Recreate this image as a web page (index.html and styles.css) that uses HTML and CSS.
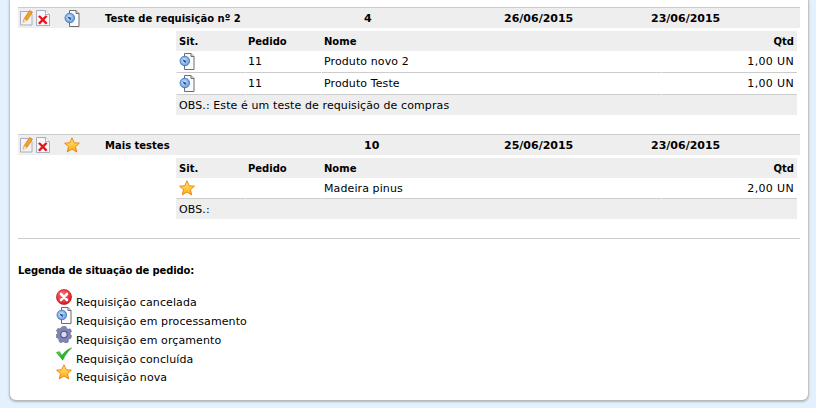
FILE: index.html
```html
<!DOCTYPE html>
<html lang="pt">

<head>
    <meta charset="utf-8">
    <title>Requisições</title>
    <link rel="stylesheet" href="styles.css">
</head>

<body>
    <svg class="defs" width="0" height="0">
        <defs>
            <linearGradient id="gStar" x1="0" y1="0" x2="0" y2="1">
                <stop offset="0" stop-color="#ffea70"/>
                <stop offset="1" stop-color="#ffa914"/>
            </linearGradient>
            <radialGradient id="gRed" cx="0.4" cy="0.3" r="0.8">
                <stop offset="0" stop-color="#ff6a6a"/>
                <stop offset="1" stop-color="#d80f20"/>
            </radialGradient>
            <radialGradient id="gBlue" cx="0.45" cy="0.45" r="0.6">
                <stop offset="0" stop-color="#e6f1fd"/>
                <stop offset="1" stop-color="#4f8ddb"/>
            </radialGradient>
            <linearGradient id="gCheck" x1="0" y1="0" x2="1" y2="1">
                <stop offset="0" stop-color="#5fe04a"/>
                <stop offset="1" stop-color="#0d8f1b"/>
            </linearGradient>
            <symbol id="i-edit" viewBox="0 0 16 16">
                <path d="M1.500 1.500h8l3.500 3v10.500h-11.500z" fill="#f2f2f7" stroke="#a9adbd"/>
                <path d="M4 12.500l1-3.500 5.500-8.500 3 1.500-5.500 8.500z" fill="#f5a020" stroke="#c96f0d" stroke-width=".6"/>
                <path d="M4 13.500l1-4.500 3.200 2z" fill="#f6dfb5"/>
            </symbol>
            <symbol id="i-del" viewBox="0 0 16 16">
                <path d="M1.500 .5h9l4 4v11h-13z" fill="#f7f7fa" stroke="#a9adbd"/>
                <path d="M10.500 .5v4h4" fill="#fff" stroke="#a9adbd"/>
                <path d="M3 6.500l1.800-1.300 3 2.800 3-2.800 1.700 1.300-3 3.300 3 3.200-1.700 1.500-3-3-3 3L3 13l3.200-3.200z" fill="#e8151c"/>
            </symbol>
            <symbol id="i-doc" viewBox="0 0 16 17">
                <path d="M5.500 .5h6.500l3 3v13h-9.500z" fill="#fbfbfb" stroke="#6a6d74"/>
                <path d="M12 .5v3h3" fill="#ddd" stroke="#6a6d74"/>
                <circle cx="5.800" cy="8" r="4.800" fill="url(#gBlue)" stroke="#3d74bd" stroke-width=".8"/>
                <path d="M3.500 6.500l4.500 1.500-1.500 .5 .5 1.800-2.200-1.600z" fill="#1d4688"/>
            </symbol>
            <symbol id="i-star" viewBox="0 0 16 16">
                <path d="M8 .8l2.200 4.900 5.200.5-3.900 3.500 1.200 5.300L8 12l-4.700 2.900 1.200-5.300L.6 6.200l5.200-.5z" fill="url(#gStar)" stroke="#e8800d" stroke-width=".9"/>
            </symbol>
            <symbol id="i-cancel" viewBox="0 0 16 16">
                <circle cx="8" cy="8" r="7.500" fill="url(#gRed)" stroke="#b30f1d" stroke-width=".7"/>
                <path d="M5 5l6 6M11 5l-6 6" stroke="#fff" stroke-width="2.600" stroke-linecap="round"/>
            </symbol>
            <symbol id="i-gear" viewBox="0 0 16 17">
                <path d="M6.500 .5h3.500l.5 2 1.800.8 1.800-.5 1.500 2.500-1.300 1.600.2 1.800 1 .8-.5 2.800-1.900.5-.8 1.700-.2 1.800-2.800.8-1.300-1.400-1.900.4-1.300 1.100L3 15l-.2-1.900-1.500-1-1-.6V8.500l1.300-1-.2-1.800L.3 5l1.500-2.500 2 .3L5.300 1.500z" fill="#7f84b4" stroke="#585c8c" stroke-width=".5"/>
                <circle cx="8" cy="8.500" r="3.200" fill="#d9dbee" stroke="#4e5278" stroke-width="1.100"/>
            </symbol>
            <symbol id="i-check" viewBox="0 0 16 16">
                <path d="M.3 6.500l3-1 2.600 3.700C8.500 5.800 11.500 3.300 15.800 1.800c-3.700 3.400-6.800 7.500-9 12.400z" fill="url(#gCheck)" stroke="#0f8a1c" stroke-width=".4"/>
            </symbol>
        </defs>
    </svg>

    <main class="painel">
        <section class="requisicao">
            <div class="req-linha">
                <span class="req-acoes">
                    <svg class="icone"><use href="#i-edit"/></svg>
                    <svg class="icone"><use href="#i-del"/></svg>
                </span>
                <span class="req-sit"><svg class="icone alta"><use href="#i-doc"/></svg></span>
                <span class="req-nome">Teste de requisição nº 2</span>
                <span class="req-num">4</span>
                <span class="req-num req-data">26/06/2015</span>
                <span class="req-num">23/06/2015</span>
            </div>
            <table class="itens">
                <thead>
                    <tr>
                        <th class="col-sit">Sit.</th>
                        <th class="col-ped">Pedido</th>
                        <th class="col-nome">Nome</th>
                        <th class="col-qtd">Qtd</th>
                    </tr>
                </thead>
                <tbody>
                    <tr class="alta">
                        <td><svg class="icone alta"><use href="#i-doc"/></svg></td>
                        <td>11</td>
                        <td>Produto novo 2</td>
                        <td class="col-qtd">1,00 UN</td>
                    </tr>
                    <tr class="alta">
                        <td><svg class="icone alta"><use href="#i-doc"/></svg></td>
                        <td>11</td>
                        <td>Produto Teste</td>
                        <td class="col-qtd">1,00 UN</td>
                    </tr>
                    <tr>
                        <td class="obs" colspan="4">OBS.: Este é um teste de requisição de compras</td>
                    </tr>
                </tbody>
            </table>
        </section>

        <section class="requisicao">
            <div class="req-linha">
                <span class="req-acoes">
                    <svg class="icone"><use href="#i-edit"/></svg>
                    <svg class="icone"><use href="#i-del"/></svg>
                </span>
                <span class="req-sit"><svg class="icone"><use href="#i-star"/></svg></span>
                <span class="req-nome">Mais testes</span>
                <span class="req-num">10</span>
                <span class="req-num req-data">25/06/2015</span>
                <span class="req-num">23/06/2015</span>
            </div>
            <table class="itens">
                <thead>
                    <tr>
                        <th class="col-sit">Sit.</th>
                        <th class="col-ped">Pedido</th>
                        <th class="col-nome">Nome</th>
                        <th class="col-qtd">Qtd</th>
                    </tr>
                </thead>
                <tbody>
                    <tr>
                        <td><svg class="icone"><use href="#i-star"/></svg></td>
                        <td></td>
                        <td>Madeira pinus</td>
                        <td class="col-qtd">2,00 UN</td>
                    </tr>
                    <tr>
                        <td class="obs" colspan="4">OBS.:</td>
                    </tr>
                </tbody>
            </table>
        </section>

        <hr class="divisor">

        <h4 class="legenda-titulo">Legenda de situação de pedido:</h4>
        <ul class="legenda">
            <li><svg class="icone"><use href="#i-cancel"/></svg>Requisição cancelada</li>
            <li><svg class="icone alta"><use href="#i-doc"/></svg>Requisição em processamento</li>
            <li><svg class="icone alta"><use href="#i-gear"/></svg>Requisição em orçamento</li>
            <li><svg class="icone"><use href="#i-check"/></svg>Requisição concluída</li>
            <li><svg class="icone"><use href="#i-star"/></svg>Requisição nova</li>
        </ul>
    </main>
</body>

</html>
```

FILE: styles.css
```css
* {
    box-sizing: border-box;
}

html,
body {
    height: 100%;
}

body {
    margin: 0;
    overflow: hidden;
    background-color: #e3f0fd;
    color: #000;
    font-family: "DejaVu Sans", Verdana, sans-serif;
    font-size: 11px;
    letter-spacing: 0.1px;
}

.defs {
    position: absolute;
}

.icone {
    display: block;
    flex: none;
    width: 16px;
    height: 16px;
}

.icone.alta {
    height: 17px;
}

.painel {
    width: 798px;
    height: 400px;
    margin-left: 10px;
    padding: 7px 8px 0 8px;
    background-color: #fff;
    border-radius: 0 0 6px 6px;
    box-shadow: 0 1px 2px 1px #b5b5b5;
}

.requisicao {
    margin-bottom: 19px;
}

.req-linha {
    display: grid;
    grid-template-columns: 46px 41px 259px 30px 110px 147px 1fr;
    align-items: center;
    height: 21px;
    background-color: #eee;
    border-top: 1px solid #ccc;
    font-size: 10px;
    font-weight: bold;
    letter-spacing: 0;
}

.req-acoes {
    display: flex;
    padding-left: 1px;
}

.req-num {
    font-size: 11px;
}

.req-data {
    grid-column: 6;
}

.itens {
    width: 621px;
    margin: 3px 0 0 158px;
    border-collapse: separate;
    border-spacing: 0;
    table-layout: fixed;
}

.itens th {
    height: 20px;
    padding: 1px 3px 0 3px;
    background-color: #eee;
    font-size: 10px;
    letter-spacing: 0;
    text-align: left;
}

.itens td {
    height: 21px;
    padding: 0 3px 0 2px;
    border-bottom: 1px solid #ccc;
    border-left: 1px solid #fff;
}

.itens .alta td {
    height: 22px;
}

.col-sit {
    width: 69px;
}

.col-ped {
    width: 76px;
}

.col-nome {
    width: 340px;
}

.itens .col-qtd {
    text-align: right;
}

.itens td.col-qtd {
    letter-spacing: 0.35px;
}

.itens .obs {
    height: 20px;
    padding-left: 3px;
    background-color: #eee;
    border: 0;
}

.divisor {
    margin: 0;
    border: 0;
    border-top: 1px solid #ccc;
}

.legenda-titulo {
    margin: 26px 0 0 0;
    font-size: 10px;
    letter-spacing: -0.13px;
}

.legenda {
    margin: 14px 0 0 38px;
    padding: 0;
    list-style: none;
}

.legenda li {
    display: flex;
    align-items: flex-end;
    gap: 4px;
    height: 19px;
}

.legenda li:last-child {
    height: 18px;
}

.legenda .icone {
    margin-bottom: 4px;
}
```
